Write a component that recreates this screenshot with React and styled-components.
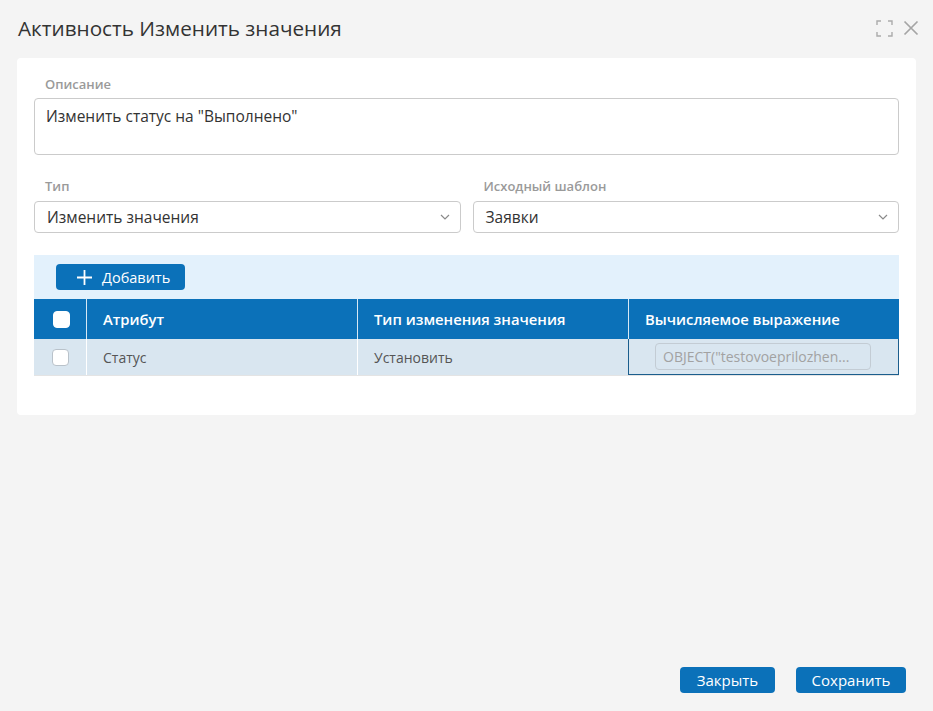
import React from "react";
import styled, { createGlobalStyle } from "styled-components";

const Global = createGlobalStyle`
  html, body { margin: 0; padding: 0; background: #f4f4f4; }
  body { font-family: "Open Sans", "Noto Sans", sans-serif; color: #333; }
  * { box-sizing: border-box; }
`;

const Dialog = styled.div`
  width: 933px;
  height: 711px;
  display: flex;
  flex-direction: column;
  background: #f4f4f4;
`;

const Header = styled.div`
  height: 58px;
  display: flex;
  align-items: center;
  justify-content: space-between;
  padding: 0 14px 2px 18px;
`;

const Title = styled.h1`
  margin: 0;
  font-size: 20.7px;
  font-weight: 400;
  color: #333;
`;

const HeaderIcons = styled.div`
  display: flex;
  align-items: center;
  gap: 10px;
  color: #a9a9a9;
`;

const Card = styled.div`
  margin: 0 17px;
  background: #fff;
  border-radius: 4px;
  padding: 17px 17px 39px;
  display: flex;
  flex-direction: column;
`;

const Label = styled.div`
  font-size: 13px;
  line-height: 18px;
  font-weight: 600;
  color: #9a9a9a;
  padding-left: 11px;
  margin-bottom: ${(p) => p.$mb || 5}px;
`;

const TextArea = styled.div`
  height: 57px;
  border: 1px solid #cbcbcb;
  border-radius: 4px;
  padding: 6px 11px;
  font-size: 15.5px;
  line-height: 22px;
  color: #333;
`;

const Row2 = styled.div`
  display: grid;
  grid-template-columns: 1fr 1fr;
  column-gap: 12px;
  margin-top: 22px;
`;

const Field = styled.div`
  display: flex;
  flex-direction: column;
`;

const Select = styled.div`
  height: 32px;
  border: 1px solid #cbcbcb;
  border-radius: 4px;
  padding: 0 10px 0 12px;
  display: flex;
  align-items: center;
  justify-content: space-between;
  font-size: 15.5px;
  color: #333;
`;

const Toolbar = styled.div`
  margin-top: 22px;
  height: 44px;
  background: #e3f1fc;
  display: flex;
  align-items: center;
  padding-left: 22px;
`;

const AddButton = styled.button`
  height: 26px;
  width: 129px;
  border: none;
  border-radius: 4px;
  background: #0b71b9;
  color: #fff;
  font-family: inherit;
  font-size: 14.5px;
  display: flex;
  align-items: center;
  gap: 10px;
  padding: 0 0 0 21px;
`;

const Table = styled.div`
  display: grid;
  grid-template-columns: 52px 271px 271px 1fr;
  border-bottom: 1px solid #e4e4e4;
`;

const HeadCell = styled.div`
  height: 40px;
  background: #0b71b9;
  color: #fff;
  font-size: 14.8px;
  font-weight: 600;
  display: flex;
  align-items: center;
  justify-content: ${(p) => (p.$center ? "center" : "flex-start")};
  padding-left: ${(p) => (p.$center ? 0 : 16)}px;
  border-left: ${(p) => (p.$first ? "none" : "1px solid #d6e8f5")};
`;

const Cell = styled.div`
  height: 36px;
  background: #d9e6f0;
  color: #555;
  font-size: 14px;
  display: flex;
  align-items: center;
  justify-content: ${(p) => (p.$center ? "center" : "flex-start")};
  padding-left: ${(p) => (p.$center ? 0 : 16)}px;
  border-left: ${(p) => (p.$first ? "none" : "1px solid #fff")};
`;

const ActiveCell = styled(Cell)`
  border: 1px solid #1b5e8d;
  border-top: none;
  padding-left: 26px;
`;

const ExprInput = styled.div`
  width: 216px;
  height: 27px;
  border: 1px solid #c3ccd4;
  border-radius: 4px;
  padding: 0 7px;
  display: flex;
  align-items: center;
  color: #a2a2a2;
  font-size: 14px;
  white-space: nowrap;
  overflow: hidden;
`;

const CheckBox = styled.span`
  width: 17px;
  height: 17px;
  border-radius: 4px;
  background: #fff;
  border: 1px solid ${(p) => (p.$head ? "#fff" : "#b9c2ca")};
  display: inline-block;
  margin-left: ${(p) => (p.$head ? 2 : 0)}px;
`;

const Spacer = styled.div`
  flex: 1;
`;

const Footer = styled.div`
  display: flex;
  justify-content: flex-end;
  gap: 21px;
  padding: 0 27px 18px 0;
`;

const FooterButton = styled.button`
  height: 26px;
  width: ${(p) => p.$w}px;
  border: none;
  border-radius: 4px;
  background: #0b71b9;
  color: #fff;
  font-family: inherit;
  font-size: 15px;
  padding: 0;
`;

const Chevron = () => (
  <svg width="10" height="6" viewBox="0 0 10 6">
    <path d="M1 1l4 4 4-4" fill="none" stroke="#8a8a8a" strokeWidth="1.2" />
  </svg>
);

export default function App() {
  return (
    <>
      <Global />
      <Dialog>
        <Header>
          <Title>Активность Изменить значения</Title>
          <HeaderIcons>
            <svg width="17" height="17" viewBox="0 0 17 17">
              <path
                d="M1 5V1h4M12 1h4v4M16 12v4h-4M5 16H1v-4"
                fill="none"
                stroke="#ababab"
                strokeWidth="1.4"
              />
            </svg>
            <svg width="16" height="16" viewBox="0 0 16 16">
              <path d="M1.5 1.5l13 13M14.5 1.5l-13 13" fill="none" stroke="#a5a5a5" strokeWidth="1.7" />
            </svg>
          </HeaderIcons>
        </Header>
        <Card>
          <Label>Описание</Label>
          <TextArea>Изменить статус на "Выполнено"</TextArea>
          <Row2>
            <Field>
              <Label $mb={6}>Тип</Label>
              <Select>
                Изменить значения
                <Chevron />
              </Select>
            </Field>
            <Field>
              <Label $mb={6}>Исходный шаблон</Label>
              <Select>
                Заявки
                <Chevron />
              </Select>
            </Field>
          </Row2>
          <Toolbar>
            <AddButton>
              <svg width="15" height="15" viewBox="0 0 15 15">
                <path d="M7.5 0v15M0 7.5h15" stroke="#fff" strokeWidth="1.8" />
              </svg>
              Добавить
            </AddButton>
          </Toolbar>
          <Table>
            <HeadCell $first $center>
              <CheckBox $head />
            </HeadCell>
            <HeadCell>Атрибут</HeadCell>
            <HeadCell>Тип изменения значения</HeadCell>
            <HeadCell>Вычисляемое выражение</HeadCell>
            <Cell $first $center>
              <CheckBox />
            </Cell>
            <Cell>Статус</Cell>
            <Cell>Установить</Cell>
            <ActiveCell>
              <ExprInput>OBJECT("testovoeprilozhen...</ExprInput>
            </ActiveCell>
          </Table>
        </Card>
        <Spacer />
        <Footer>
          <FooterButton $w={95}>Закрыть</FooterButton>
          <FooterButton $w={110}>Сохранить</FooterButton>
        </Footer>
      </Dialog>
    </>
  );
}
